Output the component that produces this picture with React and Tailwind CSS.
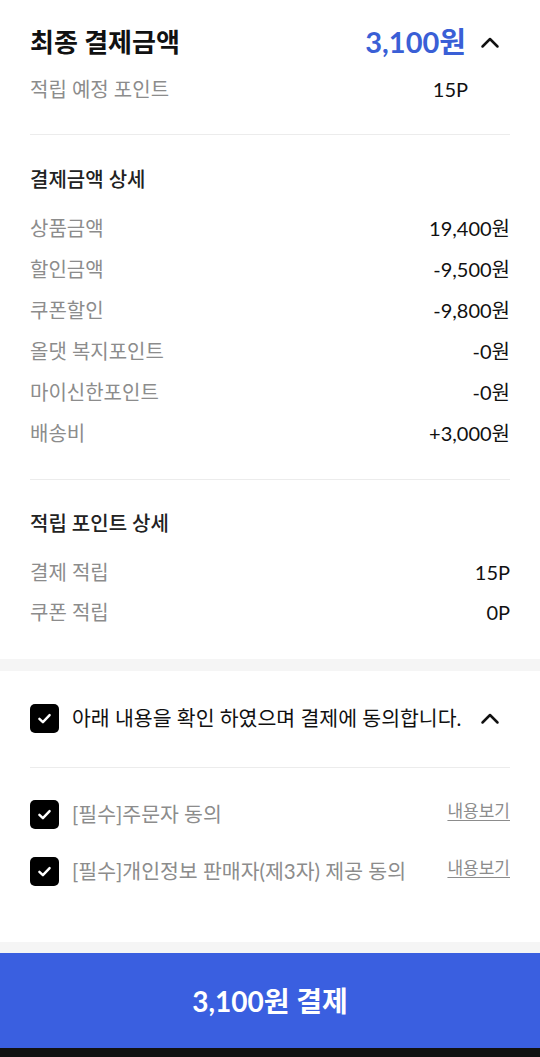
const font = { fontFamily: 'Lato, "Noto Sans CJK KR", sans-serif' };

function ChevronUp() {
  return (
    <svg width="20" height="20" viewBox="0 0 20 20" fill="none" className="shrink-0">
      <path d="M2.5 14.5L10 7L17.5 14.5" stroke="#111" strokeWidth="2.5" strokeLinecap="round" strokeLinejoin="round" />
    </svg>
  );
}

function CheckBox() {
  return (
    <span className="w-[29px] h-[29px] rounded-[5px] bg-black flex items-center justify-center shrink-0">
      <svg width="17" height="17" viewBox="0 0 16 16" fill="none">
        <path d="M3.2 8.3L6.5 11.4L12.8 4.8" stroke="#fff" strokeWidth="2.3" strokeLinecap="round" strokeLinejoin="round" />
      </svg>
    </span>
  );
}

function Row({ label, value, h }) {
  return (
    <div className={`flex items-center justify-between ${h}`}>
      <span className="text-[20px] text-[#8c8c8c]">{label}</span>
      <span className="text-[20px] text-[#111]">{value}</span>
    </div>
  );
}

const details = [
  ["상품금액", "19,400원"],
  ["할인금액", "-9,500원"],
  ["쿠폰할인", "-9,800원"],
  ["올댓 복지포인트", "-0원"],
  ["마이신한포인트", "-0원"],
  ["배송비", "+3,000원"],
];

export default function App() {
  return (
    <div className="w-[540px] h-[1057px] bg-white flex flex-col overflow-hidden" style={font}>
      <section className="px-[30px] pt-[22px]">
        <div className="flex items-center justify-between h-[40px]">
          <h1 className="text-[26px] font-bold text-[#111]">최종 결제금액</h1>
          <div className="flex items-center gap-[14px] pr-[10px]">
            <span className="text-[29px] font-bold text-[#3a5fd6]">3,100원</span>
            <ChevronUp />
          </div>
        </div>
        <div className="flex items-center justify-between h-[30px] mt-[12px] pr-[42px]">
          <span className="text-[20px] text-[#8c8c8c]">적립 예정 포인트</span>
          <span className="text-[20px] text-[#111]">15P</span>
        </div>
        <div className="h-px bg-[#ececec] mt-[30px]" />

        <h2 className="text-[20px] font-medium text-[#222] mt-[29px] h-[30px] flex items-center">결제금액 상세</h2>
        <div className="mt-[13px]">
          {details.map(([l, v]) => (
            <Row key={l} label={l} value={v} h="h-[41px]" />
          ))}
        </div>
        <div className="h-px bg-[#ececec] mt-[26px]" />

        <h2 className="text-[20px] font-medium text-[#222] mt-[28px] h-[30px] flex items-center">적립 포인트 상세</h2>
        <div className="mt-[14px]">
          <Row label="결제 적립" value="15P" h="h-[40px]" />
          <Row label="쿠폰 적립" value="0P" h="h-[40px]" />
        </div>
      </section>

      <div className="h-[12px] bg-[#f5f5f5] mt-[27px]" />

      <section className="px-[30px] flex-1">
        <div className="flex items-center justify-between mt-[32px] h-[30px]">
          <div className="flex items-center gap-[13px]">
            <CheckBox />
            <span className="text-[20.5px] text-[#111]">아래 내용을 확인 하였으며 결제에 동의합니다.</span>
          </div>
          <div className="pr-[10px]">
            <ChevronUp />
          </div>
        </div>
        <div className="h-px bg-[#ececec] mt-[34px]" />
        <div className="flex items-center justify-between mt-[31px] h-[30px]">
          <div className="flex items-center gap-[13px]">
            <CheckBox />
            <span className="text-[20.5px] text-[#8c8c8c]">[필수]주문자 동의</span>
          </div>
          <span className="text-[17px] text-[#8c8c8c] underline underline-offset-[3px] -mt-[6px]">내용보기</span>
        </div>
        <div className="flex items-center justify-between mt-[27px] h-[30px]">
          <div className="flex items-center gap-[13px]">
            <CheckBox />
            <span className="text-[20.5px] text-[#8c8c8c]">[필수]개인정보 판매자(제3자) 제공 동의</span>
          </div>
          <span className="text-[17px] text-[#8c8c8c] underline underline-offset-[3px] -mt-[6px]">내용보기</span>
        </div>
      </section>

      <div className="h-[11px] bg-[#f5f5f5]" />
      <button className="h-[95px] bg-[#3a5fe0] text-white text-[28px] font-bold flex items-center justify-center shrink-0">
        3,100원 결제
      </button>
      <div className="h-[9px] bg-[#111] shrink-0" />
    </div>
  );
}
